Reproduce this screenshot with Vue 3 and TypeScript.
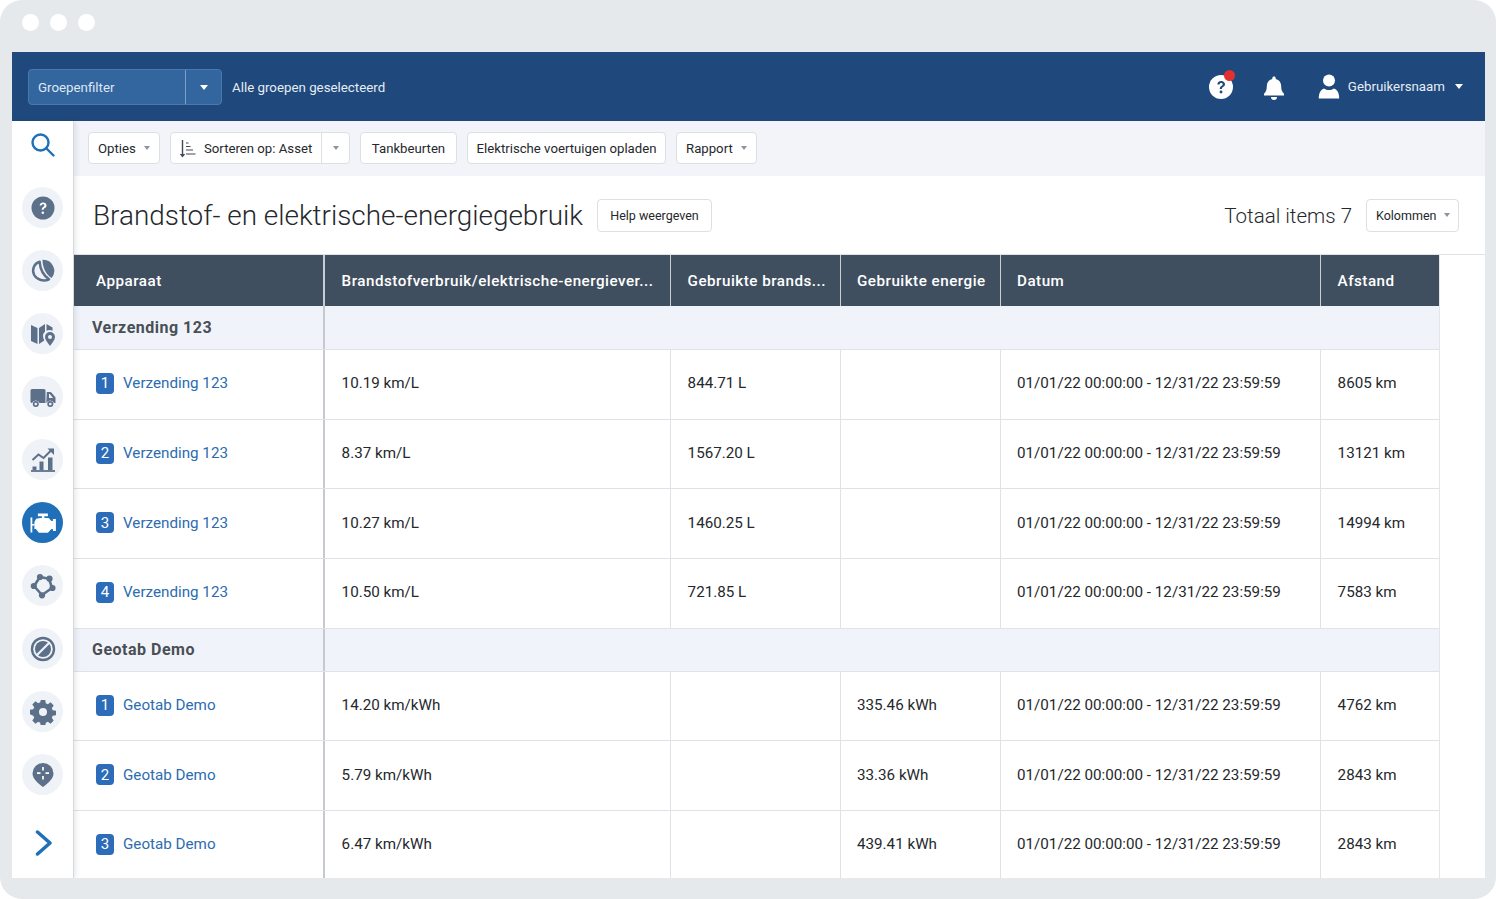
<script setup lang="ts">
interface Row { n: number; name: string; eff: string; fuel: string; energy: string; dist: string }
interface Group { name: string; rows: Row[] }

const period = '01/01/22 00:00:00 - 12/31/22 23:59:59'
const groups: Group[] = [
  {
    name: 'Verzending 123',
    rows: [
      { n: 1, name: 'Verzending 123', eff: '10.19 km/L', fuel: '844.71 L', energy: '', dist: '8605 km' },
      { n: 2, name: 'Verzending 123', eff: '8.37 km/L', fuel: '1567.20 L', energy: '', dist: '13121 km' },
      { n: 3, name: 'Verzending 123', eff: '10.27 km/L', fuel: '1460.25 L', energy: '', dist: '14994 km' },
      { n: 4, name: 'Verzending 123', eff: '10.50 km/L', fuel: '721.85 L', energy: '', dist: '7583 km' },
    ],
  },
  {
    name: 'Geotab Demo',
    rows: [
      { n: 1, name: 'Geotab Demo', eff: '14.20 km/kWh', fuel: '', energy: '335.46 kWh', dist: '4762 km' },
      { n: 2, name: 'Geotab Demo', eff: '5.79 km/kWh', fuel: '', energy: '33.36 kWh', dist: '2843 km' },
      { n: 3, name: 'Geotab Demo', eff: '6.47 km/kWh', fuel: '', energy: '439.41 kWh', dist: '2843 km' },
    ],
  },
]
const headers = [
  'Apparaat',
  'Brandstofverbruik/elektrische-energiever...',
  'Gebruikte brands...',
  'Gebruikte energie',
  'Datum',
  'Afstand',
]
const navItems = ['help', 'pie', 'map', 'truck', 'chart', 'engine', 'hub', 'block', 'gear', 'pin']
</script>

<template>
  <div class="frame">
    <div class="dots"><i></i><i></i><i></i></div>
    <div class="app">
      <header class="topbar">
        <div class="group-select">
          <span class="gs-label">Groepenfilter</span>
          <span class="gs-arrow"><b class="caret white"></b></span>
        </div>
        <span class="gs-text">Alle groepen geselecteerd</span>
        <div class="top-right">
          <span class="help-wrap">
            <svg width="26" height="26" viewBox="0 0 26 26">
              <circle cx="13" cy="14" r="12" fill="#fff" />
              <path d="M9.3 11.4c.2-2.2 1.8-3.4 3.9-3.4 2.2 0 3.8 1.3 3.8 3.2 0 1.5-.9 2.2-1.9 2.9-.9.6-1.2 1-1.2 2h-2.2c0-1.7.6-2.4 1.7-3.2.8-.6 1.3-1 1.3-1.7 0-.8-.6-1.3-1.5-1.3-1 0-1.6.6-1.7 1.5z" fill="#1f487c" />
              <circle cx="13" cy="19" r="1.4" fill="#1f487c" />
            </svg>
            <i class="red-dot"></i>
          </span>
          <svg class="bell" width="22" height="24" viewBox="0 0 22 24">
            <path d="M11 0.5c1 0 1.7.7 1.7 1.7v.7c3.600.8 5.500 3.700 5.500 7.400 0 3.600.7 5.400 2.800 7.500v1.700H1v-1.700c2.100-2.100 2.800-3.900 2.800-7.500 0-3.700 1.900-6.600 5.500-7.400v-.7c0-1 .7-1.700 1.700-1.700z" fill="#fff" />
            <path d="M8 21h6a3 3 0 0 1-6 0z" fill="#fff" />
          </svg>
          <svg class="user" width="22" height="25" viewBox="0 0 22 25">
            <circle cx="11" cy="6.400" r="6" fill="#fff" />
            <path d="M0.800 24.500c0-5.600 1.800-8.800 5.400-10 1.400 1 3 1.500 4.800 1.500s3.400-.5 4.800-1.500c3.600 1.200 5.400 4.400 5.400 10z" fill="#fff" />
          </svg>
          <span class="username">Gebruikersnaam</span>
          <b class="caret white"></b>
        </div>
      </header>

      <div class="body">
        <aside class="sidebar">
          <svg class="search" width="26" height="26" viewBox="0 0 26 26" fill="none" stroke="#1f70b8" stroke-width="2.400" stroke-linecap="round">
            <circle cx="10.500" cy="10.500" r="8" />
            <path d="M16.500 16.500l7 7" />
          </svg>
          <nav class="nav">
            <span v-for="item in navItems" :key="item" class="nav-item" :class="{ active: item === 'engine' }">
              <svg width="26" height="26" viewBox="0 0 26 26">
                <template v-if="item === 'help'">
                  <circle cx="13" cy="13" r="11.500" fill="#5d708a" />
                  <path d="M9.600 10.600c.2-2 1.600-3.100 3.500-3.100 2 0 3.400 1.200 3.400 2.900 0 1.400-.8 2-1.700 2.600-.8.500-1.100.9-1.100 1.800h-2c0-1.500.5-2.200 1.500-2.900.7-.5 1.200-.9 1.200-1.500 0-.7-.5-1.200-1.300-1.200-.9 0-1.500.5-1.500 1.400z" fill="#fff" />
                  <circle cx="12.800" cy="17.800" r="1.300" fill="#fff" />
                </template>
                <template v-else-if="item === 'pie'">
                  <path d="M12.500 1.800A11 11 0 0 1 21.500 20C16 16.500 12.500 9.500 12.500 1.800z" fill="#5d708a" />
                  <path d="M9.600 3.700C3.800 5.500 1.600 12 4.200 17c3 5.300 9.800 6.700 14.800 4.300C14 18 10.200 11.500 9.600 3.700z" fill="none" stroke="#5d708a" stroke-width="2.500" stroke-linejoin="round" />
                </template>
                <template v-else-if="item === 'map'">
                  <path d="M1 4l6.500 3v16L1 20zM9 7l6-4v7.500a6.500 6.500 0 0 0-2 4.500c0 1.500.5 3 1.300 4.500L9 23zM16.500 3l6 3.500v3.300a6 6 0 0 0-6 0z" fill="#5d708a" />
                  <path fill-rule="evenodd" d="M20 11a5 5 0 0 1 5 5c0 3-3 6-5 9-2-3-5-6-5-9a5 5 0 0 1 5-5zm0 3a2 2 0 1 0 0 4 2 2 0 0 0 0-4z" fill="#5d708a" />
                </template>
                <template v-else-if="item === 'truck'">
                  <path d="M0.500 6.500A1.500 1.500 0 0 1 2 5h12A1.500 1.500 0 0 1 15.500 6.500V19H9.500a4 4 0 0 0-7.500 0H2A1.500 1.500 0 0 1 0.500 17.500z" fill="#5d708a" />
                  <path fill-rule="evenodd" d="M16.800 8h3.400c.5 0 .9.200 1.200.5l3.600 4.200c.3.300.5.800.5 1.200V19h-1.500a4 4 0 0 0-7.500 0h-.2zm2.200 2v4h4l-3.200-4z" fill="#5d708a" />
                  <circle cx="5.800" cy="20" r="2.200" fill="#eff2f7" stroke="#5d708a" stroke-width="1.700" />
                  <circle cx="20.300" cy="20" r="2.200" fill="#eff2f7" stroke="#5d708a" stroke-width="1.700" />
                </template>
                <template v-else-if="item === 'chart'">
                  <path d="M1 24h24" stroke="#5d708a" stroke-width="1.800" fill="none" />
                  <path d="M2.500 19.500h4V23h-4zM9.500 14.500h4V23h-4zM18 10.500h4.500V23H18z" fill="#5d708a" />
                  <path d="M2.500 13l6-5.500 5 3.500 7.500-7.500" stroke="#5d708a" stroke-width="2" fill="none" />
                  <path d="M17.500 1.500h6.500v6.500z" fill="#5d708a" />
                </template>
                <template v-else-if="item === 'engine'">
                  <path d="M7.900 3.500h10v2.700h-3.500V8h4.300l2.700 3h1.500V9h3v12h-3v-2h-1.500l-3.500 3.800H8.900L5.900 19H4.400v-7l1.700-3.300L10.400 8h1.500V6.200h-4z" fill="#fff" />
                  <path d="M0.500 7.500h1.800v15H0.500z" fill="#fff" />
                  <path d="M2 14h2.500v1.600H2z" fill="#fff" />
                </template>
                <template v-else-if="item === 'hub'">
                  <path d="M10 4l9 1.700L22 15l-10 7-8-9z" fill="none" stroke="#5d708a" stroke-width="2.600" stroke-linejoin="round" />
                  <circle cx="10" cy="4" r="3.100" fill="#5d708a" /><circle cx="19.500" cy="5.700" r="3.100" fill="#5d708a" /><circle cx="22.500" cy="15" r="3.100" fill="#5d708a" /><circle cx="12" cy="22.300" r="3.100" fill="#5d708a" /><circle cx="3.800" cy="13" r="3.100" fill="#5d708a" />
                </template>
                <template v-else-if="item === 'block'">
                  <circle cx="13" cy="13" r="11" fill="none" stroke="#5d708a" stroke-width="2.400" />
                  <circle cx="13" cy="13" r="8" fill="#5d708a" />
                  <path d="M6.500 19.500l13-13" stroke="#eff2f7" stroke-width="2.200" />
                </template>
                <template v-else-if="item === 'gear'">
                  <path fill-rule="evenodd" d="M10.800 1h4.400l.6 3.300 2 .9 2.800-1.900 3.100 3.100-1.900 2.800.9 2 3.300.6v4.400l-3.300.6-.9 2 1.900 2.800-3.100 3.100-2.800-1.900-2 .9-.6 3.300h-4.400l-.6-3.300-2-.9-2.800 1.900-3.100-3.100 1.900-2.800-.9-2L0 15.200v-4.400l3.300-.6.900-2-1.900-2.800 3.100-3.100 2.800 1.900 2-.9zM13 9a4 4 0 1 0 0 8 4 4 0 0 0 0-8z" fill="#5d708a" />
                </template>
                <template v-else>
                  <path d="M13 1a10.500 10.500 0 0 1 10.500 10.500C23.500 17 17.500 21.500 13 25 8.500 21.500 2.500 17 2.500 11.500A10.500 10.500 0 0 1 13 1z" fill="#5d708a" />
                  <path d="M13 5v3.500M13 14v3.500M7 11.200h3.500M15.500 11.200H19" stroke="#fff" stroke-width="1.700" />
                </template>
              </svg>
            </span>
          </nav>
          <svg class="chevron" width="18" height="26" viewBox="0 0 18 26" fill="none" stroke="#1f70b8" stroke-width="3.500" stroke-linecap="round" stroke-linejoin="round">
            <path d="M2.500 2l12.500 11L2.500 24" />
          </svg>
        </aside>

        <main class="content">
          <div class="toolbar">
            <button class="btn w-opties">Opties<b class="caret grey"></b></button>
            <div class="btn split">
              <span class="split-main">
                <svg width="17" height="19" viewBox="0 0 17 19" fill="none" stroke="#3f4a57" stroke-width="1.100">
                  <path d="M3.500 1v15.500" stroke-width="1.400" />
                  <path d="M0.800 15l2.700 3.400L6.200 15z" fill="#3f4a57" stroke="none" />
                  <path d="M7 4h2.500M7 7.500h4.500M7 11h7M7 15h9.500" />
                </svg>
                Sorteren op: Asset
              </span>
              <span class="split-arrow"><b class="caret grey nomargin"></b></span>
            </div>
            <button class="btn plain">Tankbeurten</button>
            <button class="btn plain wide">Elektrische voertuigen opladen</button>
            <button class="btn w-rapport">Rapport<b class="caret grey"></b></button>
          </div>

          <div class="title-row">
            <h1>Brandstof- en elektrische-energiegebruik</h1>
            <button class="btn small help-btn">Help weergeven</button>
            <span class="total">Totaal items 7</span>
            <button class="btn small cols-btn">Kolommen<b class="caret grey"></b></button>
          </div>

          <div class="table">
            <div class="tr thead">
              <div v-for="h in headers" :key="h" class="td">{{ h }}</div>
            </div>
            <template v-for="g in groups" :key="g.name">
              <div class="tr group">
                <div class="td">{{ g.name }}</div>
                <div class="td rest"></div>
              </div>
              <div v-for="r in g.rows" :key="g.name + r.n" class="tr row">
                <div class="td device"><span class="badge">{{ r.n }}</span><a>{{ r.name }}</a></div>
                <div class="td">{{ r.eff }}</div>
                <div class="td">{{ r.fuel }}</div>
                <div class="td">{{ r.energy }}</div>
                <div class="td">{{ period }}</div>
                <div class="td">{{ r.dist }}</div>
              </div>
            </template>
          </div>
        </main>
      </div>
    </div>
  </div>
</template>

<style>
html, body { margin: 0; background: #fff; }
</style>

<style scoped>
.frame {
  box-sizing: border-box;
  width: 1496px;
  height: 899px;
  background: #e6e9ec;
  border-radius: 22px;
  padding: 0 11px 21px 12px;
  display: flex;
  flex-direction: column;
  font-family: Roboto, "Liberation Sans", sans-serif;
  color: #25282c;
  overflow: hidden;
}
.dots { height: 52px; flex: none; display: flex; gap: 11px; padding: 14px 0 0 10px; box-sizing: border-box; }
.dots i { width: 17px; height: 17px; border-radius: 50%; background: #fff; }
.app { flex: 1; min-height: 0; display: flex; flex-direction: column; background: #fff; overflow: hidden; }

.topbar {
  height: 69px;
  flex: none;
  background: #1f487c;
  display: flex;
  align-items: center;
  padding: 0 22px 0 16px;
  box-sizing: border-box;
}
.group-select {
  width: 194px;
  height: 36px;
  margin-top: 1px;
  box-sizing: border-box;
  border: 1px solid #4a78ab;
  border-radius: 4px;
  background: #33659f;
  display: flex;
  color: #dfe8f2;
  font-size: 13.300px;
}
.gs-label { flex: 1; display: flex; align-items: center; padding-left: 9px; }
.gs-arrow { width: 35px; border-left: 1px solid #7e9fc4; display: flex; align-items: center; justify-content: center; }
.gs-text { margin-left: 10px; margin-top: 1px; color: #e6edf4; font-size: 13.300px; }
.top-right { margin-left: auto; display: flex; align-items: center; }
.help-wrap { position: relative; width: 26px; height: 26px; display: block; margin-right: 29px; margin-top: -2px; }
.red-dot { position: absolute; right: -1px; top: -3px; width: 11px; height: 11px; border-radius: 50%; background: #e2322f; }
.bell { margin-right: 33px; margin-top: 2px; }
.user { margin-right: 8px; }
.username { color: #e6edf4; font-size: 13.300px; margin-right: 10px; }

.caret { display: inline-block; width: 0; height: 0; border-left: 4px solid transparent; border-right: 4px solid transparent; }
.caret.white { border-top: 5px solid #fff; }
.caret.grey { border-left-width: 3.500px; border-right-width: 3.500px; border-top: 4px solid #8b95a1; margin-left: 8px; }
.caret.nomargin { margin-left: 0; }

.body { flex: 1; min-height: 0; display: flex; }
.sidebar {
  width: 62px;
  flex: none;
  box-sizing: border-box;
  background: #fff;
  border-right: 1px solid #d5d8dc;
  box-shadow: 2px 0 5px rgba(60, 70, 85, 0.12);
  display: flex;
  flex-direction: column;
  align-items: center;
  padding-top: 11px;
  position: relative;
  z-index: 1;
}
.nav { margin-top: 29px; display: flex; flex-direction: column; gap: 22px; }
.nav-item { width: 41px; height: 41px; border-radius: 50%; background: #eff2f7; display: flex; align-items: center; justify-content: center; }
.nav-item.active { background: #1f70b8; }
.chevron { margin-top: 35px; margin-left: 3px; }

.content { flex: 1; min-width: 0; display: flex; flex-direction: column; }
.toolbar { height: 55px; flex: none; background: #f2f4f9; display: flex; align-items: center; gap: 10px; padding: 0 14px 1px; box-sizing: border-box; }
.btn {
  box-sizing: border-box;
  height: 32px;
  border: 1px solid #dcdfe4;
  border-radius: 4px;
  background: #fff;
  font-family: inherit;
  font-size: 13.200px;
  color: #25282c;
  display: flex;
  align-items: center;
  padding: 0;
  white-space: nowrap;
}
.w-opties { width: 72px; padding-left: 9px; }
.w-rapport { width: 81px; padding-left: 9px; }
.plain { width: 97px; justify-content: center; }
.plain.wide { width: 199px; }
.split { width: 180px; }
.split-main { flex: 1; display: flex; align-items: center; gap: 8px; padding-left: 8px; height: 100%; }
.split-arrow { width: 27px; height: 100%; border-left: 1px solid #dcdfe4; display: flex; align-items: center; justify-content: center; }

.title-row { height: 79px; flex: none; display: flex; align-items: center; padding: 0 26px 0 19px; box-sizing: border-box; border-bottom: 1px solid #dfe2e6; }
h1 { margin: 0; font-size: 27.900px; font-weight: 300; color: #25282c; white-space: nowrap; }
.small { font-size: 12.500px; height: 33px; }
.help-btn { margin-left: 14px; width: 115px; justify-content: center; }
.total { margin-left: auto; font-size: 20.500px; font-weight: 300; color: #25282c; margin-top: 2px; }
.cols-btn { margin-left: 14px; width: 93px; padding-left: 9px; }

.table { flex: 1; min-height: 0; overflow: hidden; width: 1366px; border-right: 1px solid #e3e5e8; box-sizing: border-box; }
.tr { display: grid; grid-template-columns: 251px 346px 170px 160px 320px 1fr; }
.td { box-sizing: border-box; display: flex; align-items: center; padding-left: 16.600px; font-size: 15.200px; border-right: 1px solid #dfe2e6; white-space: nowrap; }
.td:nth-child(4), .td:nth-child(5) { padding-left: 16px; }
.td:first-child { border-right: 2px solid #c6cace; }
.td:last-child { border-right: none; }
.thead { height: 51px; background: #3f4f60; color: #fff; font-weight: 500; }
.thead .td { border-right: 1px solid #c9ced4; letter-spacing: 0.500px; }
.thead .td:first-child { padding-left: 22px; border-right: 2px solid #c9ced4; }
.thead .td:last-child { border-right: none; }
.group { height: 43px; background: #f0f4fa; box-sizing: border-box; grid-template-columns: 251px 1fr; }
.group .td:first-child { padding-left: 18px; font-size: 16px; font-weight: 700; color: #4a4f55; letter-spacing: 0.500px; }
.row { height: 69.700px; border-top: 1px solid #dfe2e6; box-sizing: border-box; }
.row .td { padding-bottom: 2px; }
.row + .group { border-top: 1px solid #dfe2e6; }
.device { padding-left: 22px !important; }
.badge { width: 18px; height: 21px; border-radius: 4px; background: #2c6cb8; color: #fff; display: flex; align-items: center; justify-content: center; font-size: 15px; margin-right: 9px; }
.device a { color: #2c6cb0; }
</style>
